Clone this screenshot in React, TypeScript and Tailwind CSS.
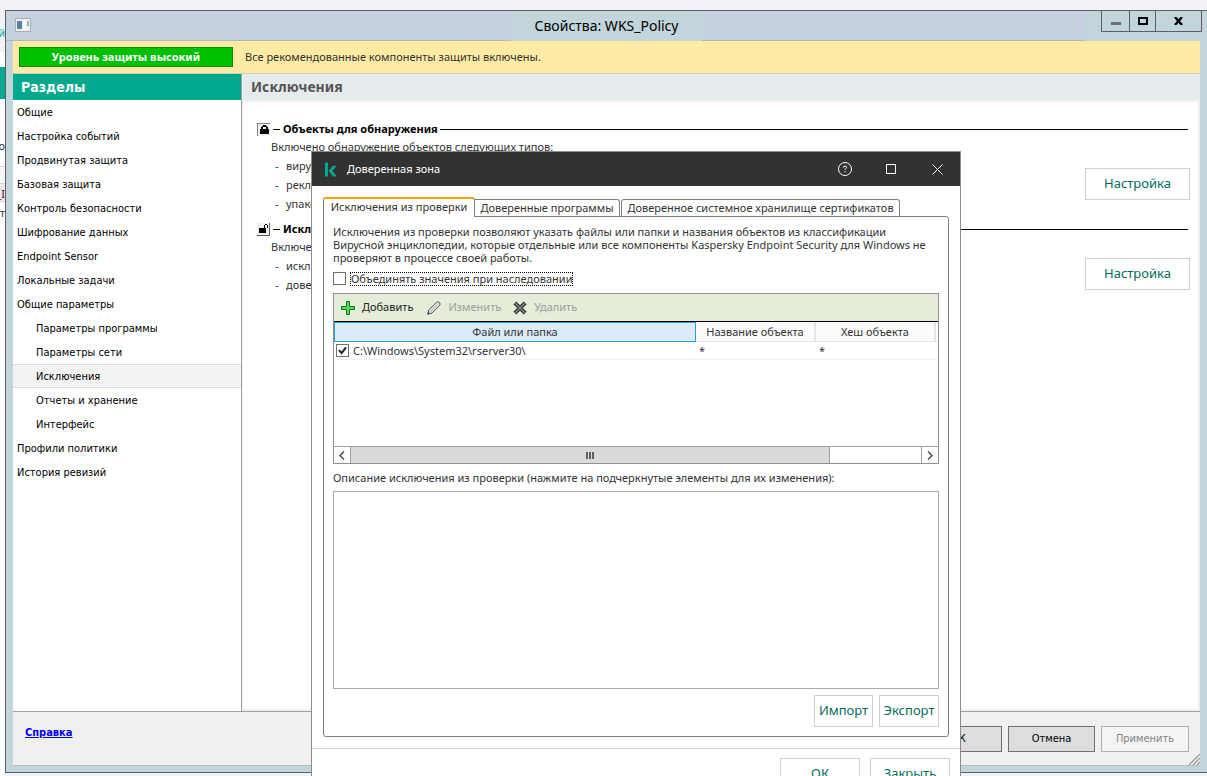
import { useState } from 'react';

const sections = [
  { name: 'Общие' },
  { name: 'Настройка событий' },
  { name: 'Продвинутая защита' },
  { name: 'Базовая защита' },
  { name: 'Контроль безопасности' },
  { name: 'Шифрование данных' },
  { name: 'Endpoint Sensor' },
  { name: 'Локальные задачи' },
  { name: 'Общие параметры' },
  { name: 'Параметры программы', child: true },
  { name: 'Параметры сети', child: true },
  { name: 'Исключения', child: true },
  { name: 'Отчеты и хранение', child: true },
  { name: 'Интерфейс', child: true },
  { name: 'Профили политики' },
  { name: 'История ревизий' },
];

const groups = [
  {
    title: 'Объекты для обнаружения',
    locked: true,
    intro: 'Включено обнаружение объектов следующих типов:',
    items: ['вирусы', 'рекламу', 'упаков'],
  },
  {
    title: 'Искл.',
    locked: false,
    intro: 'Включено',
    items: ['искл.', 'доверие'],
  },
];

const Lock = ({ locked }) => (
  <button
    type="button"
    aria-label={locked ? 'Закрыто' : 'Открыто'}
    className={
      locked
        ? 'w-[13px] h-[13px] bg-[#f0f0f0] border-t border-l border-[#808080] flex items-center justify-center'
        : 'w-[13px] h-[13px] bg-[#f0f0f0] border-b border-r border-[#606060] flex items-center justify-center'
    }
  >
    <svg width="11" height="11" viewBox="0 0 11 11" shapeRendering="crispEdges">
      {locked ? (
        <path d="M1 5h9v5H1zM2 3h2v2H2zM7 3h2v2H7zM3 2h5v1H3zM4 1h3v1H4z" />
      ) : (
        <path d="M1 5h7v5H1zM6 2h1v3H6zM7 1h2v1H7zM9 2h1v3H9z" />
      )}
    </svg>
  </button>
);

const Sidebar = () => {
  const [selected, setSelected] = useState('Исключения');

  return (
    <nav className="w-[229px] shrink-0 border-r border-[#a0a0a0] bg-white font-['DejaVu_Sans_Condensed','DejaVu_Sans',sans-serif]">
      <h2 className="h-[26px] px-2 bg-[#00a88e] text-white text-[14px] leading-[26px] font-bold">
        Разделы
      </h2>
      <ul>
        {sections.map((item) => (
          <li key={item.name}>
            <button
              type="button"
              onClick={() => setSelected(item.name)}
              className={`block w-full h-6 pt-px text-left text-[11px] leading-[22px] border-y text-black ${
                item.child ? 'pl-[23px]' : 'pl-1'
              } ${selected === item.name ? 'bg-[#f2f2f2] border-[#dedede]' : 'border-transparent'}`}
            >
              {item.name}
            </button>
          </li>
        ))}
      </ul>
    </nav>
  );
};

const Group = ({ title, locked, intro, items }) => (
  <section className="mb-[7px]">
    <div className="flex items-center h-[18px] mr-0.5">
      <Lock locked={locked} />
      <span className="w-[7px] h-px bg-black ml-[3px] mr-[3px]" />
      <h3 className="text-[11px] leading-[18px] font-bold text-black whitespace-nowrap">{title}</h3>
      <span className="flex-1 h-px bg-black ml-0.5" />
    </div>
    <div className="flex items-center justify-between">
      <div className="pl-[14px] text-[11px] text-[#333]">
        <p className="leading-[18px]">{intro}</p>
        <ul>
          {items.map((item) => (
            <li key={item} className="flex leading-[19px]">
              <span className="w-[15px] pl-1">-</span>
              {item}
            </li>
          ))}
        </ul>
      </div>
      <button
        type="button"
        className="w-[105px] h-8 mt-4 border border-[#d0d0d0] bg-white text-[13px] text-[#006d5c]"
      >
        Настройка
      </button>
    </div>
  </section>
);

const Check = ({ id, label, defaultChecked = false }) => (
  <span className="grid w-[13px] h-[13px] shrink-0">
    <input
      id={id}
      type="checkbox"
      aria-label={label}
      defaultChecked={defaultChecked}
      className="peer appearance-none w-[13px] h-[13px] border border-[#707070] bg-white col-start-1 row-start-1"
    />
    <svg
      viewBox="0 0 13 13"
      className="col-start-1 row-start-1 w-[13px] h-[13px] invisible peer-checked:visible pointer-events-none"
    >
      <path d="M3 6.2l2.6 3L10 3.4" fill="none" stroke="#222" strokeWidth="2" />
    </svg>
  </span>
);

const Toolbar = () => (
  <div className="flex items-center h-7 pl-[7px] bg-[#e3edd9] border-b border-black text-[11px]">
    <button type="button" className="flex items-center gap-[7px] mr-[14px] text-[#222]">
      <svg width="14" height="14" viewBox="0 0 14 14">
        <path d="M5.5 .5h3v5h5v3h-5v5h-3v-5h-5v-3h5z" fill="#5fd35f" stroke="#0b7d15" />
      </svg>
      Добавить
    </button>
    <button type="button" disabled className="flex items-center gap-[7px] mr-[12px] text-[#a0a0a0]">
      <svg width="14" height="14" viewBox="0 0 14 14">
        <path d="M.8 13.2l1.2-4.4 7.4-7.4q1.5-1.4 3 .1t.1 3L5 12z" fill="#e4e4e4" stroke="#555" />
        <path d="M3.5 10.5l7-7" stroke="#aaa" />
        <path d="M.5 13.5l.6-2.4 1.7 1.7z" fill="#333" />
      </svg>
      Изменить
    </button>
    <button type="button" disabled className="flex items-center gap-[7px] text-[#a0a0a0]">
      <svg width="14" height="14" viewBox="0 0 14 14">
        <path d="M1.8 1.8l10.4 10.4M12.2 1.8L1.8 12.2" stroke="#333" strokeWidth="4" />
        <path d="M2 2l10 10M12 2L2 12" stroke="#8c8c8c" strokeWidth="1.4" />
      </svg>
      Удалить
    </button>
  </div>
);

const ExclusionTable = () => (
  <div className="flex flex-col h-[171px] border border-[#919191] bg-white">
    <Toolbar />
    <table className="w-full table-fixed border-separate border-spacing-0 text-[11px] text-[#333]">
      <colgroup>
        <col />
        <col className="w-[120px]" />
        <col className="w-[120px]" />
        <col className="w-[2px]" />
      </colgroup>
      <thead>
        <tr className="h-5">
          <th className="border border-[#26a0da] bg-[#dcebfe] font-normal p-0">Файл или папка</th>
          <th className="border-r-2 border-b border-[#e5e5e5] bg-[#fcfcfc] font-normal p-0 pt-px">Название объекта</th>
          <th className="border-r-2 border-b border-[#e5e5e5] bg-[#fcfcfc] font-normal p-0 pt-px">Хеш объекта</th>
          <td className="p-0 border-b border-[#e5e5e5]" />
        </tr>
      </thead>
      <tbody>
        <tr className="h-[18px]">
          <td className="p-0 pl-0.5 border-b border-[#f0f0f0]">
            <div className="flex items-center gap-1">
              <Check id="row-0" label="C:\Windows\System32\rserver30\" defaultChecked />
              <span className="leading-[17px]">C:\Windows\System32\rserver30\</span>
            </div>
          </td>
          <td className="p-0 pl-[3px] leading-[17px] border-b border-[#f0f0f0]">*</td>
          <td className="p-0 pl-[3px] leading-[17px] border-b border-[#f0f0f0]">*</td>
          <td className="p-0 border-b border-[#f0f0f0]" />
        </tr>
      </tbody>
    </table>
    <div className="mt-auto flex h-[17px] border-t border-[#a0a0a0]">
      <button type="button" aria-label="Влево" className="w-[17px] border-r border-[#a0a0a0] flex items-center justify-center">
        <svg width="6" height="9" viewBox="0 0 6 9"><path d="M5 .5l-4 4 4 4" fill="none" stroke="#444" strokeWidth="1.3" /></svg>
      </button>
      <div className="flex-1 flex">
        <div className="w-[84%] bg-[#dadada] border-r border-[#a0a0a0] flex items-center justify-center gap-px">
          <span className="w-0.5 h-[7px] bg-[#606060]" />
          <span className="w-0.5 h-[7px] bg-[#606060]" />
          <span className="w-0.5 h-[7px] bg-[#606060]" />
        </div>
      </div>
      <button type="button" aria-label="Вправо" className="w-[17px] border-l border-[#a0a0a0] flex items-center justify-center">
        <svg width="6" height="9" viewBox="0 0 6 9"><path d="M1 .5l4 4-4 4" fill="none" stroke="#444" strokeWidth="1.3" /></svg>
      </button>
    </div>
  </div>
);

const TrustedZoneDialog = () => (
  <div
    role="dialog"
    aria-label="Доверенная зона"
    className="absolute left-[311px] top-[151px] w-[650px] border border-[#8c8c8c] bg-white font-['Noto_Sans',sans-serif] text-[11px] text-[#333]"
  >
    <div className="flex items-center h-[34px] pl-[13px] pr-[17px] bg-[#323232] text-white">
      <svg width="12" height="15" viewBox="0 0 12 15" className="mr-2.5">
        <path d="M0 .5h3v14H0zM3.6 8.8L8 3.8h3.8L7.4 8.8l4.4 5.7H8.2z" fill="#00a88e" />
      </svg>
      <h2 className="text-[11px] mr-auto">Доверенная зона</h2>
      <button type="button" aria-label="Справка" className="mr-[34px]">
        <svg width="14" height="14" viewBox="0 0 14 14" fill="none" stroke="#fff">
          <circle cx="7" cy="7" r="6.5" />
          <path d="M5.4 5.6q0-1.5 1.6-1.5t1.6 1.4q0 .8-.9 1.3-.7.4-.7 1.2M7 9.2v1.2" />
        </svg>
      </button>
      <button type="button" aria-label="Развернуть" className="w-[10px] h-[10px] mr-[36px] border border-white" />
      <button type="button" aria-label="Закрыть окно">
        <svg width="11" height="11" viewBox="0 0 11 11"><path d="M.5 .5l10 10M10.5 .5l-10 10" stroke="#fff" /></svg>
      </button>
    </div>

    <div className="pt-[11px] px-[11px]">
      <div role="tablist" className="flex items-end">
        <button
          type="button"
          role="tab"
          aria-selected="true"
          className="relative w-[152px] h-5 -mb-px pb-px border-x border-t-2 border-x-[#808080] border-t-[#f0a30a] rounded-t-[3px] bg-white"
        >
          Исключения из проверки
        </button>
        <button type="button" role="tab" className="w-[145px] h-[17px] border-r border-t border-[#808080] rounded-tr-[3px]">
          Доверенные программы
        </button>
        <button type="button" role="tab" className="w-[279px] h-[17px] ml-px border-x border-t border-[#808080] rounded-t-[3px]">
          Доверенное системное хранилище сертификатов
        </button>
      </div>

      <div className="border border-[#808080] rounded-b-[3px] rounded-tr-[3px] px-[9px] pt-2 pb-[9px]">
        <p className="leading-[13px]">
          Исключения из проверки позволяют указать файлы или папки и названия объектов из классификации
          <br />
          Вирусной энциклопедии, которые отдельные или все компоненты Kaspersky Endpoint Security для Windows не
          <br />
          проверяют в процессе своей работы.
        </p>
        <div className="flex items-center h-[15px] my-[7px]">
          <Check id="merge" label="Объединять значения при наследовании" />
          <label htmlFor="merge" className="ml-1 border border-dotted border-black leading-[12px]">
            Объединять значения при наследовании
          </label>
        </div>
        <ExclusionTable />
        <label htmlFor="description" className="block mt-[5px] leading-[18px]">
          Описание исключения из проверки (нажмите на подчеркнутые элементы для их изменения):
        </label>
        <textarea id="description" className="block w-full h-[198px] mt-1 border border-[#a9a9b0] resize-none outline-none" />
        <div className="flex justify-end gap-1.5 mt-1.5 text-[13px] text-[#006d5c]">
          <button type="button" className="w-[59px] h-8 border border-[#d0d0d0]">Импорт</button>
          <button type="button" className="w-[60px] h-8 border border-[#d0d0d0]">Экспорт</button>
        </div>
      </div>
    </div>

    <div className="flex justify-end gap-2.5 mt-[11px] pt-[9px] pr-2.5 pb-2.5 border-t border-[#d0d0d0] text-[13px] text-[#006d5c]">
      <button type="button" className="w-20 h-8 border border-[#d0d0d0]">ОК</button>
      <button type="button" className="w-20 h-8 border border-[#d0d0d0]">Закрыть</button>
    </div>
  </div>
);

const TitleBar = () => (
  <header className="grid grid-cols-[1fr_auto_1fr] h-[30px] bg-[#c6d1e0] border-b border-[#b0b8c4]">
    <div className="pl-[9px] pt-[7px]">
      <svg width="16" height="14" viewBox="0 0 16 14">
        <rect x=".5" y=".5" width="15" height="13" fill="#f0f0f0" stroke="#a9aeb5" />
        <rect x="2" y="3" width="5" height="8" fill="#4f8a94" />
        <rect x="2" y="3" width="3" height="4" fill="#5580a8" />
        <rect x="8" y="3" width="3" height="8" fill="#fff" />
        <rect x="12" y="3" width="2" height="5" fill="#8fc0a8" />
      </svg>
    </div>
    <h1 className="px-[24px] bg-[#c2d5da] text-[14px] leading-[30px] text-black">Свойства: WKS_Policy</h1>
    <div className="flex justify-end">
      <div className="w-[122px] flex justify-end items-start pr-[5px] bg-[#c2d5da]">
        <button type="button" aria-label="Свернуть" className="w-[29px] h-[21px] border border-t-0 border-[#5c5f6b] flex items-center justify-center">
          <span className="w-[10px] h-[3px] mt-[5px] bg-[#6a6f76]" />
        </button>
        <button type="button" aria-label="Развернуть" className="w-[26px] h-[21px] border-r border-b border-[#5c5f6b] flex items-center justify-center">
          <span className="w-[10px] h-2 border-2 border-black" />
        </button>
        <button type="button" aria-label="Закрыть окно" className="w-[46px] h-[21px] border-r border-b border-[#5c5f6b] flex items-center justify-center">
          <svg width="9" height="8" viewBox="0 0 9 8"><path d="M1 0l7 8M8 0L1 8" stroke="#000" strokeWidth="2.4" /></svg>
        </button>
      </div>
    </div>
  </header>
);

const App = () => {
  return (
    <div className="relative flex h-screen overflow-hidden bg-[#f2f3f8] font-['Noto_Sans',sans-serif]">
      {/* sliver of the console window behind */}
      <aside aria-hidden="true" className="w-[5px] shrink-0 overflow-hidden flex flex-col items-end bg-white text-[11px] text-[#333]">
        <div className="w-full h-[52px] shrink-0 pt-6 flex justify-end bg-[#f2f3f8] text-[#00a88e] leading-[18px]">й</div>
        <div className="w-full h-8 shrink-0 mt-[15px] bg-[#00a88e]" />
        <span className="mt-[38px] leading-[18px]">о</span>
        <span className="w-full h-[18px] mt-[11px] border-y border-[#d8d8d8] bg-[#f7f7f7]" />
        <span className="w-full h-[18px] flex justify-end border-b border-[#d8d8d8] bg-[#ececec] text-[#600018] leading-[20px]">_I</span>
        <span className="mt-0.5 leading-[18px]">т</span>
      </aside>

      <div className="flex-1 min-w-0 mt-[10px] mb-[3px] flex flex-col border-l border-y border-[#5c5f6b] bg-[#c2d5da]">
        <TitleBar />
        <div className="flex-1 min-h-0 mx-[7px] mb-1.5 flex flex-col border-b border-[#b0c0c8] bg-[#f0f0f0]">
          <div className="flex items-center h-[33px] pl-1.5 bg-[#ffeba4] border-b border-[#cfcfc0] text-[11px] text-[#333]">
            <strong className="w-[214px] h-5 mr-3 border border-[#0a8a0a] bg-[#00c000] text-white text-center leading-[18px]">
              Уровень защиты высокий
            </strong>
            Все рекомендованные компоненты защиты включены.
          </div>

          <div className="flex-1 min-h-0 flex">
            <Sidebar />
            <main className="flex-1 min-w-0 ml-px mb-0.5 flex flex-col">
              <h2 className="h-[26px] mb-0.5 pl-2 bg-[#e6ebee] text-[14px] leading-[26px] font-bold text-[#555]">Исключения</h2>
              <div className="flex-1 mr-0.5 pt-[18px] pl-[14px] pr-2 bg-white">
                {groups.map((group) => (
                  <Group key={group.title} {...group} />
                ))}
              </div>
            </main>
          </div>

          <footer className="flex items-start h-[54px] shrink-0 pl-3 pr-[14px] pt-[14px] border-t border-[#a0a0a0] text-[11px] font-['DejaVu_Sans_Condensed','DejaVu_Sans',sans-serif]">
            <a href="#help" className="mr-auto font-bold underline text-[#0000f0] leading-[14px]">Справка</a>
            <div className="flex gap-1.5 text-black">
              <button type="button" className="w-[87px] h-[26px] border border-[#707070] bg-[#dddddd]">ОК</button>
              <button type="button" className="w-[87px] h-[26px] border border-[#707070] bg-[#dddddd]">Отмена</button>
              <button type="button" disabled className="w-[88px] h-[26px] border border-[#adb2b5] bg-[#f4f4f4] text-[#838383]">
                Применить
              </button>
            </div>
            <svg width="11" height="11" viewBox="0 0 11 11" className="self-end -mr-[14px]">
              <path d="M0 11L11 0M4 11l7-7M8 11l3-3" stroke="#909090" strokeWidth="1.2" />
            </svg>
          </footer>
        </div>
      </div>

      <TrustedZoneDialog />
    </div>
  );
};

export default App;
